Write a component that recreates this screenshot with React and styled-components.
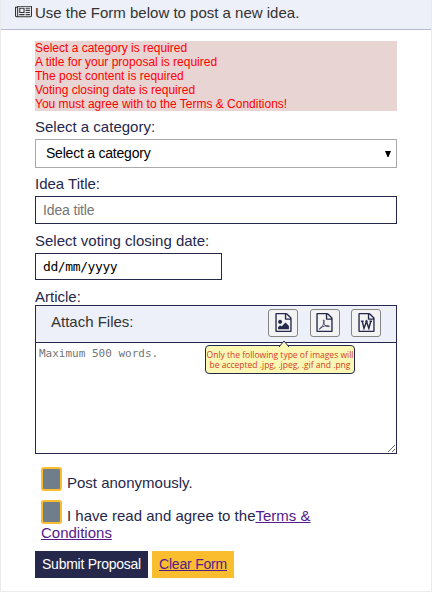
import React from "react";
import styled, { createGlobalStyle } from "styled-components";

const GlobalStyle = createGlobalStyle`
  *, *::before, *::after { box-sizing: border-box; }
  body {
    margin: 0;
    background: #fff;
    color: #25284b;
    font: 15px/17px "Liberation Sans", Arial, sans-serif;
  }
`;

const Page = styled.main`
  height: 592px;
  border: 1px solid #ebebee;
  border-top: 0;
  overflow: hidden;
`;

const Header = styled.header`
  display: flex;
  height: 30px;
  padding: 0 0 4px 14px;
  align-items: center;
  gap: 3px;
  color: #333;
  background: #edf0f8;
  border-bottom: 1px solid #b5b9cf;
`;

const HeaderIcon = styled.svg`
  width: 17px;
  height: 13px;
  flex: none;
`;

const Form = styled.form`
  display: flex;
  flex-direction: column;
  width: 362px;
  margin: 11px 0 0 34px;
`;

const Errors = styled.ul`
  height: 70px;
  margin: 0;
  padding: 0;
  list-style: none;
  color: #f00;
  background: #e8d4d2;
  font-size: 12px;
  line-height: 14px;
`;

const Label = styled.label`
  display: block;
  height: 28px;
  padding-top: 7px;
  white-space: nowrap;
`;

const ArticleLabel = styled(Label)`
  height: 25px;
  padding-top: 8px;
`;

const SelectBox = styled.div`
  display: flex;
  height: 29px;
  padding: 0 5px 0 10px;
  align-items: center;
  justify-content: space-between;
  border: 1px solid #a9a9a9;
  color: #000;
  font-size: 14px;
  letter-spacing: -0.22px;
`;

const Arrow = styled.svg`
  width: 6px;
  height: 6px;
`;

const TitleInput = styled.input`
  width: 100%;
  height: 28px;
  padding: 1px 7px;
  border: 1px solid #25284b;
  border-radius: 0;
  background: #fff;
  font: 14px "Liberation Sans", Arial, sans-serif;
  letter-spacing: -0.15px;
  &::placeholder { color: #757575; opacity: 1; }
`;

const TitleField = styled.div`
  height: 29px;
`;

const DateInput = styled.input`
  width: 187px;
  height: 27px;
  padding: 0 7px;
  border: 1px solid #25284b;
  border-radius: 0;
  background: #fff;
  color: #000;
  font: 13px "DejaVu Sans Mono", monospace;
  letter-spacing: -0.4px;
`;

const Editor = styled.section`
  height: 149px;
  border: 1px solid #25284b;
`;

const Toolbar = styled.div`
  position: relative;
  display: flex;
  height: 37px;
  padding: 0 15px 2px;
  align-items: center;
  justify-content: space-between;
  color: #333;
  background: #edf0f8;
  border-bottom: 1px solid #25284b;
`;

const ToolbarTitle = styled.span`
  padding-bottom: 3px;
`;

const FileButtons = styled.div`
  display: flex;
  gap: 11.5px;
`;

const FileButton = styled.button`
  display: flex;
  width: 30px;
  height: 28px;
  padding: 0 0 1px;
  align-items: center;
  justify-content: center;
  color: #25284b;
  background: #f3f3f3;
  border: 1px solid #858585;
  border-radius: 3px;
`;

const Glyph = styled.svg`
  width: 19px;
  height: 19px;
  flex: none;
`;

const Tip = styled.div`
  position: absolute;
  top: 39px;
  left: 169px;
  width: 150px;
  height: 29px;
  padding-top: 4px;
  color: #d63b24;
  background: #fbf8b5;
  border: 1px solid #25284b;
  border-radius: 4px;
  font: 8.5px/10px "Open Sans", "Noto Sans", sans-serif;
  text-align: center;
  white-space: nowrap;
`;

const TipPointer = styled.svg`
  position: absolute;
  top: -6px;
  left: 72px;
  width: 12px;
  height: 7px;
`;

const TextArea = styled.textarea`
  display: block;
  width: 100%;
  height: 110px;
  padding: 4px 3px 3px;
  border: 0;
  background: #fff;
  resize: both;
  font: 11px/14px "DejaVu Sans Mono", monospace;
  &::placeholder { color: #757575; opacity: 1; }
`;

const Check = styled.label`
  display: block;
  height: ${(p) => (p.$tall ? 51 : 33)}px;
  padding-left: 6px;
`;

const Checks = styled.div`
  padding-top: 13px;
`;

const Box = styled.span`
  display: inline-block;
  width: 21px;
  height: 24px;
  margin-right: 5px;
  vertical-align: -3px;
  background: #707d8a;
  border: 2px solid #fabd2e;
  border-radius: 3px;
`;

const TextLink = styled.a`
  color: #551a8b;
  text-decoration: underline;
`;

const Actions = styled.div`
  display: flex;
  gap: 4px;
`;

const Action = styled.button`
  width: ${(p) => (p.$clear ? 82 : 113)}px;
  height: 27px;
  padding: 0 0 1px;
  border: 0;
  color: ${(p) => (p.$clear ? "#551a8b" : "#fff")};
  background: ${(p) => (p.$clear ? "#fabd2e" : "#25284b")};
  font: 14px "Liberation Sans", Arial, sans-serif;
  letter-spacing: ${(p) => (p.$clear ? -0.2 : -0.25)}px;
  text-decoration: ${(p) => (p.$clear ? "underline" : "none")};
`;

const messages = [
  "Select a category is required",
  "A title for your proposal is required",
  "The post content is required",
  "Voting closing date is required",
  "You must agree with to the Terms & Conditions!",
];

const newspaper =
  "M1024 512h-384v384h384v-384zm128 640v128h-640v-128h640zm0-768v640h-640v-640h640zm640 768v128h-512v-128h512zm0-256v128h-512v-128h512zm0-256v128h-512v-128h512zm0-256v128h-512v-128h512zm-1536 960v-960h-128v960q0 26 19 45t45 19 45-19 19-45zm1664 0v-1088h-1536v1088q0 33-11 64h1483q26 0 45-19t19-45zm128-1216v1216q0 80-56 136t-136 56h-1664q-80 0-136-56t-56-136v-1088h256v-128h1792z";
const sheet =
  "M1596 380q28 28 48 76t20 88v1152q0 40-28 68t-68 28h-1344q-40 0-68-28t-28-68v-1600q0-40 28-68t68-28h896q40 0 88 20t76 48zm-444-244v376h376q-10-29-22-41l-313-313q-12-12-41-22zm384 1528v-1024h-416q-40 0-68-28t-28-68v-416h-768v1536h1280z";

function FileIcon({ kind }) {
  return (
    <Glyph viewBox="0 0 1792 1792" fill="currentColor" aria-hidden="true">
      <path d={sheet} />
      {kind === "image" && (
        <path d="M1408 1216v320H384v-192l192-192 128 128 384-384zM576 1024q-80 0-136-56t-56-136 56-136 136-56 136 56 56 136-56 136-136 56z" />
      )}
      {kind === "pdf" && (
        <path
          d="M825 650C755 650 795 835 850 970C935 1190 1050 1280 1280 1290C1420 1295 1380 1180 1230 1190C1000 1200 760 1250 590 1335C405 1430 380 1550 440 1530C570 1480 700 1240 795 1040C880 850 900 650 825 650Z"
          fill="none"
          stroke="currentColor"
          strokeWidth="72"
        />
      )}
      {kind === "word" && (
        <path
          d="M370 775H620M780 775H1010M1180 775H1420M495 775L660 1450L895 800L1120 1450L1300 775"
          fill="none"
          stroke="currentColor"
          strokeWidth="135"
        />
      )}
    </Glyph>
  );
}

export default function App() {
  return (
    <>
      <GlobalStyle />
      <Page>
        <Header>
          <HeaderIcon viewBox="0 256 2048 1408" fill="currentColor" aria-hidden="true">
            <path d={newspaper} />
          </HeaderIcon>
          Use the Form below to post a new idea.
        </Header>
        <Form onSubmit={(e) => e.preventDefault()}>
          <Errors>
            {messages.map((m) => (
              <li key={m}>{m}</li>
            ))}
          </Errors>
          <Label>Select a category:</Label>
          <SelectBox role="combobox">
            Select a category
            <Arrow viewBox="0 0 6 6">
              <path d="M0 0h6L3.5 6h-1z" />
            </Arrow>
          </SelectBox>
          <Label htmlFor="title">Idea Title:</Label>
          <TitleField>
            <TitleInput id="title" placeholder="Idea title" />
          </TitleField>
          <Label htmlFor="date">Select voting closing date:</Label>
          <DateInput id="date" defaultValue="dd/mm/yyyy" />
          <ArticleLabel htmlFor="article">Article:</ArticleLabel>
          <Editor>
            <Toolbar>
              <ToolbarTitle>Attach Files:</ToolbarTitle>
              <FileButtons>
                <FileButton type="button" aria-label="Image"><FileIcon kind="image" /></FileButton>
                <FileButton type="button" aria-label="PDF"><FileIcon kind="pdf" /></FileButton>
                <FileButton type="button" aria-label="Word"><FileIcon kind="word" /></FileButton>
              </FileButtons>
              <Tip role="tooltip">
                <TipPointer viewBox="0 0 12 7">
                  <path d="M1 7L6 1L11 7" fill="#fbf8b5" stroke="#25284b" />
                </TipPointer>
                Only the following type of images will
                <br />
                be accepted .jpg, .jpeg, .gif and .png
              </Tip>
            </Toolbar>
            <TextArea id="article" placeholder="Maximum 500 words." />
          </Editor>
          <Checks>
            <Check><Box />Post anonymously.</Check>
            <Check $tall>
              <Box />I have read and agree to the<TextLink>Terms &amp;<br />Conditions</TextLink>
            </Check>
          </Checks>
          <Actions>
            <Action>Submit Proposal</Action>
            <Action type="button" $clear>Clear Form</Action>
          </Actions>
        </Form>
      </Page>
    </>
  );
}
